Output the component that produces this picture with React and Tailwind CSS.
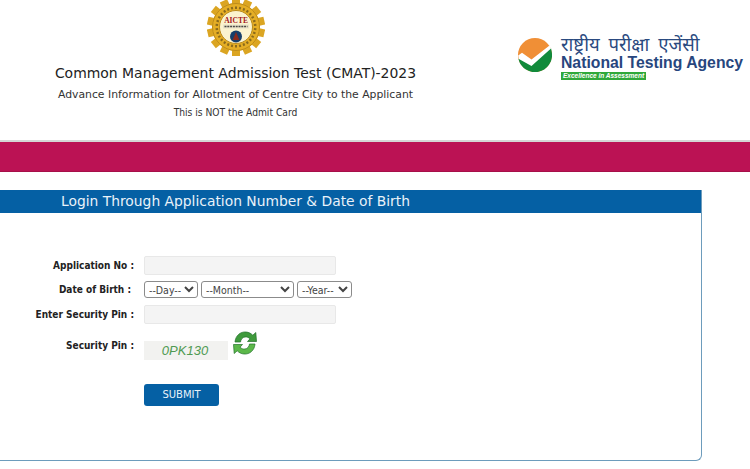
import React from 'react'

const verdana = { fontFamily: '"DejaVu Sans", Verdana, sans-serif' }
const tahoma = { fontFamily: '"DejaVu Sans Condensed", "DejaVu Sans", Tahoma, sans-serif' }

function AicteLogo() {
  const teeth = Array.from({ length: 14 }, (_, i) => (i * 360) / 14)
  const marks = Array.from({ length: 30 }, (_, i) => (i * 360) / 30)
  return (
    <svg width="58" height="56" viewBox="0 0 58 56" className="block">
      <g transform="translate(29 27)">
        {teeth.map(a => (
          <rect key={a} x="-4" y="-29" width="8" height="8" fill="#dba522" transform={`rotate(${a})`} />
        ))}
        <circle r="24" fill="#e5ae25" />
        <circle r="23.5" fill="none" stroke="#bd8c1b" strokeWidth="1" />
        <circle r="16.5" fill="#fbf3cf" stroke="#b98a1c" strokeWidth="1" />
        {marks.map(a => (
          <rect key={a} x="-1" y="-20.5" width="2" height="2.5" fill="#8a6a1c" transform={`rotate(${a})`} />
        ))}
        <text x="0" y="-4" textAnchor="middle" fontSize="7.5" fontWeight="700" fill="#a3161c" fontFamily="Liberation Serif, serif">AICTE</text>
        <rect x="-13" y="-2.5" width="26" height="4" fill="#e9e2c8" />
        <path d="M-11.5 -0.5 H11.5" stroke="#4b4a45" strokeWidth="1.4" strokeDasharray="2 0.8" />
        <circle cy="9.5" r="6" fill="#173f6b" />
        <path d="M0 5 L3.4 13 L-3.4 13 Z" fill="#8a2a1d" />
      </g>
    </svg>
  )
}

function NtaMark() {
  return (
    <svg width="34" height="34" viewBox="0 0 34 34" className="block shrink-0">
      <circle cx="17" cy="17" r="17" fill="#f08f36" />
      <path d="M0.6 21.5 A17 17 0 0 0 33.9 15 L33 10 L13.5 24 L2 17 Z" fill="#118a3b" />
      <path d="M0.2 17.5 L4 14.8 L13.5 21.5 L31.5 7.5 L33 10.5 L13.5 28 L0.9 21 Z" fill="#ffffff" />
    </svg>
  )
}

function RefreshIcon() {
  return (
    <svg width="26" height="26" viewBox="0 0 26 26" className="block">
      <path d="M3 12 C3.5 5.5 8.5 1.5 14 2 C17 2.2 19 3.5 20.8 5.2 L23.8 2.5 L24.5 11.5 L15.5 11.5 L18 8.8 C16.5 7.4 15 6.8 13 7 C10.5 7.2 8.8 9.4 8.5 12 Z" fill="#3f9a3c" stroke="#1f7028" strokeWidth="0.7" />
      <path d="M23 14 C22.5 20.5 17.5 24.5 12 24 C9 23.8 7 22.5 5.2 20.8 L2.2 23.5 L1.5 14.5 L10.5 14.5 L8 17.2 C9.5 18.6 11 19.2 13 19 C15.5 18.8 17.2 16.6 17.5 14 Z" fill="#5cb84a" stroke="#1f7028" strokeWidth="0.7" />
    </svg>
  )
}

function Label({ children }) {
  return <div className="w-[135px] shrink-0 pr-px text-right text-[10px] font-bold text-[#222]" style={tahoma}>{children}</div>
}

function Select({ label, className }) {
  return (
    <select className={`h-[17px] rounded-[3px] border border-[#8b8b8b] bg-white text-[10.5px] text-[#444] ${className}`} style={tahoma}>
      <option>{label}</option>
    </select>
  )
}

export default function App() {
  return (
    <div className="h-[469px] w-[750px] overflow-hidden bg-white" style={verdana}>
      <header className="flex h-[140px]">
        <div className="flex w-[471px] shrink-0 flex-col items-center">
          <AicteLogo />
          <h1 className="mt-[7px] text-[13.95px] leading-[20px] font-normal text-[#222]">Common Management Admission Test (CMAT)-2023</h1>
          <p className="mt-[4px] text-[10.83px] leading-[16px] text-[#333]">Advance Information for Allotment of Centre City to the Applicant</p>
          <p className="mt-[3px] text-[10.2px] leading-[14px] text-[#333]" style={tahoma}>This is NOT the Admit Card</p>
        </div>
        <div className="ml-[47px] flex items-start gap-[9px] pt-[35px]">
          <div className="mt-[3px]"><NtaMark /></div>
          <div className="flex flex-col items-start" style={{ fontFamily: '"Liberation Sans", Arial, sans-serif' }}>
            <span className="h-[19px] text-[18.5px] leading-[18px] whitespace-nowrap text-[#2a4a80] [word-spacing:4px]" style={{ fontFamily: '"Noto Sans", "Liberation Sans", sans-serif' }}>राष्ट्रीय परीक्षा एजेंसी</span>
            <span className="text-[15.76px] leading-[18px] font-bold whitespace-nowrap text-[#27467e]">National Testing Agency</span>
            <span className="bg-[#2fa83a] px-[2px] text-[6.5px] leading-[8px] font-bold text-white italic">Excellence in Assessment</span>
          </div>
        </div>
      </header>

      <div className="h-[2px] bg-[#d5d5d5]" />
      <div className="h-[30px] border-b border-[#a60f49] bg-[#bb1254]" />

      <section className="mt-[18px] h-[271px] w-[702px] rounded-br-[6px] border-r border-b border-[#6d9cbc]">
        <h2 className="h-[23px] bg-[#0560a4] pl-[61px] text-[13.85px] leading-[23px] font-normal text-[#e9f2f9]">Login Through Application Number &amp; Date of Birth</h2>

        <div className="flex flex-col pt-[43px]">
          <div className="flex h-[19px] items-center gap-[9px]">
            <Label>Application No :</Label>
            <input className="h-[19px] w-[192px] rounded-[2px] border border-[#e8e8e8] bg-[#f4f4f4]" />
          </div>
          <div className="mt-[6px] flex h-[17px] items-center gap-[9px]">
            <div className="w-[131px] shrink-0 text-right text-[10px] font-bold text-[#222]" style={tahoma}>Date of Birth :</div>
            <div className="ml-[4px] flex gap-[3px]">
              <Select label="--Day--" className="w-[54px]" />
              <Select label="--Month--" className="w-[93px]" />
              <Select label="--Year--" className="w-[55px]" />
            </div>
          </div>
          <div className="mt-[7px] flex h-[19px] items-center gap-[9px]">
            <Label>Enter Security Pin :</Label>
            <input className="h-[19px] w-[192px] rounded-[2px] border border-[#e8e8e8] bg-[#f4f4f4]" />
          </div>
          <div className="mt-[7px] flex h-[30px] items-start gap-[9px]">
            <div className="pt-[7px]"><Label>Security Pin :</Label></div>
            <div className="mt-[10px] flex h-[19px] w-[84px] items-center justify-center bg-[#f2f2f0] pr-[2px] text-[13px] text-[#4f9a52] italic" style={{ fontFamily: '"Liberation Sans", Arial, sans-serif' }}>
              0PK130
            </div>
            <div className="-mt-[1px] ml-[-5px]"><RefreshIcon /></div>
          </div>
          <div className="mt-[20px] pl-[144px]">
            <button type="button" className="h-[22px] w-[75px] rounded-[3px] bg-[#0560a4] text-[10px] text-[#e9f2f9]">SUBMIT</button>
          </div>
        </div>
      </section>
    </div>
  )
}
